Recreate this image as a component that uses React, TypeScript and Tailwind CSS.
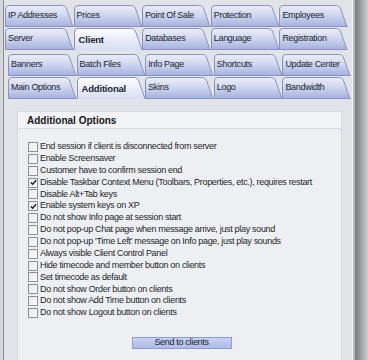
import React from 'react';

const outerRows = [
  ['IP Addresses', 'Prices', 'Point Of Sale', 'Protection', 'Employees'],
  ['Server', 'Client', 'Databases', 'Language', 'Registration'],
];

const innerRows = [
  ['Banners', 'Batch Files', 'Info Page', 'Shortcuts', 'Update Center'],
  ['Main Options', 'Additional', 'Skins', 'Logo', 'Bandwidth'],
];

const options: [string, boolean][] = [
  ['End session if client is disconnected from server', false],
  ['Enable Screensaver', false],
  ['Customer have to confirm session end', false],
  ['Disable Taskbar Context Menu (Toolbars, Properties, etc.), requires restart', true],
  ['Disable Alt+Tab keys', false],
  ['Enable system keys on XP', true],
  ['Do not show Info page at session start', false],
  ['Do not pop-up Chat page when message arrive, just play sound', false],
  ["Do not pop-up 'Time Left' message on Info page, just play sounds", false],
  ['Always visible Client Control Panel', false],
  ['Hide timecode and member button on clients', false],
  ['Set timecode as default', false],
  ['Do not show Order button on clients', false],
  ['Do not show Add Time button on clients', false],
  ['Do not show Logout button on clients', false],
];

const Tab: React.FC<{ label: string; active: boolean }> = ({ label, active }) => (
  <div className="relative h-[22px]">
    <svg className="absolute inset-0 h-full w-full" viewBox="0 0 68 22" preserveAspectRatio="none">
      <path
        d="M0.5 22 V4 Q0.5 0.5 4 0.5 H57 Q59.5 0.5 60.8 3 L67.5 22 Z"
        fill={active ? 'url(#tabOn)' : 'url(#tabOff)'}
      />
      <path
        d="M0.5 22 V4 Q0.5 0.5 4 0.5 H57 Q59.5 0.5 60.8 3 L67.5 22"
        fill="none"
        stroke="#8792c0"
        strokeWidth="1"
        vectorEffect="non-scaling-stroke"
      />
      {!active && (
        <line x1="0" y1="21.5" x2="68" y2="21.5" stroke="#8792c0" strokeWidth="1" vectorEffect="non-scaling-stroke" />
      )}
    </svg>
    <span
      className={`relative flex h-full items-center whitespace-nowrap pl-[3px] text-[#1c1f2e] ${
        active ? 'pl-[5px] pt-[3px] text-[9.5px] font-bold tracking-[-0.2px]' : ''
      }`}
    >
      {label}
    </span>
  </div>
);

const TabRows: React.FC<{ rows: string[][]; active: string }> = ({ rows, active }) => (
  <div className="flex w-[343px] flex-col gap-px">
    {rows.map((row, i) => (
      <div key={i} className="grid grid-cols-5">
        {row.map((t) => (
          <Tab key={t} label={t} active={t === active} />
        ))}
      </div>
    ))}
  </div>
);

const Check: React.FC<{ on: boolean }> = ({ on }) => (
  <span className="flex h-[10px] w-[10px] shrink-0 items-center justify-center border border-[#8e8f93] bg-gradient-to-br from-[#e9e9ec] to-[#fbfbfc]">
    {on && (
      <svg viewBox="0 0 8 8" className="h-[7px] w-[7px]">
        <path d="M1 4 L3 6 L7 1.5" fill="none" stroke="#1b1b1b" strokeWidth="1.6" />
      </svg>
    )}
  </span>
);

export default function App() {
  return (
    <div className="flex h-[360px] w-[368px] overflow-hidden bg-[#e1e3e9] font-['Liberation_Sans',sans-serif] text-[9px] tracking-[-0.32px] text-[#1d1f28]">
      <svg className="absolute h-0 w-0">
        <defs>
          <linearGradient id="tabOff" x1="0" y1="0" x2="0" y2="1">
            <stop offset="0" stopColor="#eceef8" />
            <stop offset="0.45" stopColor="#cfd6ef" />
            <stop offset="1" stopColor="#a4b0dd" />
          </linearGradient>
          <linearGradient id="tabOn" x1="0" y1="0" x2="0" y2="1">
            <stop offset="0" stopColor="#fdfdff" />
            <stop offset="1" stopColor="#d6def5" />
          </linearGradient>
        </defs>
      </svg>

      <div className="flex min-w-0 flex-1 bg-[#d3d5da] pl-[3px]">
        <div className="flex min-w-0 flex-1 flex-col border-l border-[#8a8c92] bg-[#e1e3e9] pl-px pt-[5px]">
          <TabRows rows={outerRows} active="Client" />
          <div className="flex min-w-0 flex-1 flex-col pl-[3px] pt-[4px]">
            <TabRows rows={innerRows} active="Additional" />
            <div className="min-w-0 flex-1 pl-[9px] pr-[10px] pt-[12px]">
              <div className="h-[260px] overflow-hidden border border-[#d6d9e0] bg-[#edeff3]">
                <div className="flex h-[17px] items-center border-b border-[#d8dbe2] bg-[#f2f3f6] pl-[9px] text-[10px] font-bold tracking-normal text-[#15161c]">
                  Additional Options
                </div>
                <div className="flex flex-col pl-[10px] pt-[12px]">
                  {options.map(([label, on]) => (
                    <div key={label} className="flex h-[11.86px] items-center gap-[2px] whitespace-nowrap">
                      <Check on={on} />
                      <span>{label}</span>
                    </div>
                  ))}
                </div>
                <div className="flex justify-center pl-[4px] pt-[18px]">
                  <div className="flex h-[12px] w-[100px] items-center justify-center border border-[#8f9ccf] bg-gradient-to-b from-[#c9d2f2] to-[#aebbe8] text-[#1a1c28]">
                    Send to clients
                  </div>
                </div>
              </div>
            </div>
          </div>
        </div>
      </div>

      <div className="flex w-[16px] border-l border-[#f4f5f7]">
        <div className="w-[2px] bg-[#b9bbbf]" />
        <div className="flex-1 bg-gradient-to-r from-[#7b7c7f] via-[#a2a3a6] to-[#cfd0d2]" />
      </div>
    </div>
  );
}
